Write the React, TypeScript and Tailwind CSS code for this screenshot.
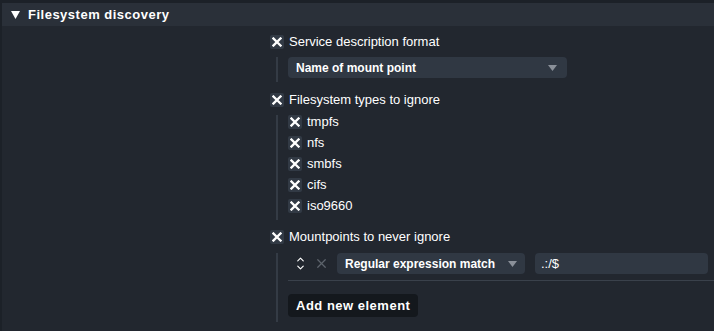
import { ChevronUp, ChevronDown, X } from 'lucide-react';

const font = { fontFamily: '"Liberation Sans", Arial, sans-serif' };

function Check() {
  return (
    <span className="flex items-center justify-center w-[14px] h-[14px] rounded-[2px] bg-[#323a45] shrink-0">
      <svg width="10" height="10" viewBox="0 0 10 10">
        <path d="M1.5 1.5 L8.5 8.5 M8.5 1.5 L1.5 8.5" stroke="#ffffff" strokeWidth="2.3" strokeLinecap="square" />
      </svg>
    </span>
  );
}

function Caret() {
  return (
    <svg width="9" height="6" viewBox="0 0 9 6" className="shrink-0">
      <path d="M0 0 L9 0 L4.5 6 Z" fill="#8a9099" />
    </svg>
  );
}

const fsTypes = ['tmpfs', 'nfs', 'smbfs', 'cifs', 'iso9660'];

export default function App() {
  return (
    <div className="w-[714px] h-[331px] bg-[#1c2128] pt-[3px] pl-[2px] text-white" style={font}>
      <div className="h-full bg-[#22272f]">
        {/* Header */}
        <div className="h-[23px] bg-[#2a3039] flex items-center pl-[9px] gap-[8px]">
          <svg width="9" height="8" viewBox="0 0 9 8">
            <path d="M0 0 L9 0 L4.5 8 Z" fill="#ffffff" />
          </svg>
          <span className="text-[13px] font-bold tracking-[0.5px]">Filesystem discovery</span>
        </div>

        {/* Content */}
        <div className="pl-[268px] pt-[8px] text-[13px]">
          {/* Service description format */}
          <div className="flex items-center gap-[5px] h-[16px]">
            <Check />
            <span>Service description format</span>
          </div>
          <div className="flex mt-[7px] ml-[6px]">
            <div className="w-[2px] bg-[#343b45] mr-[10px]" />
            <div className="w-[279px] h-[21px] rounded-[4px] bg-[#303843] flex items-center justify-between pl-[8px] pr-[10px] mb-[4px]">
              <span className="font-bold text-[12px]">Name of mount point</span>
              <Caret />
            </div>
          </div>

          {/* Filesystem types to ignore */}
          <div className="flex items-center gap-[5px] h-[16px] mt-[10px]">
            <Check />
            <span>Filesystem types to ignore</span>
          </div>
          <div className="flex mt-[7px] ml-[6px]">
            <div className="w-[2px] bg-[#343b45] mr-[10px]" />
            <div className="flex flex-col gap-[7px] pb-[7px]">
              {fsTypes.map((t) => (
                <div key={t} className="flex items-center gap-[5px] h-[14px]">
                  <Check />
                  <span>{t}</span>
                </div>
              ))}
            </div>
          </div>

          {/* Mountpoints to never ignore */}
          <div className="flex items-center gap-[5px] h-[16px] mt-[9px]">
            <Check />
            <span>Mountpoints to never ignore</span>
          </div>
          <div className="flex mt-[8px] ml-[6px]">
            <div className="w-[2px] bg-[#343b45] mr-[10px]" />
            <div className="flex-1">
              <div className="flex items-center h-[21px]">
                <div className="flex flex-col items-center w-[12px] ml-[6px] -space-y-[3px]">
                  <ChevronUp size={11} strokeWidth={2.5} color="#ffffff" />
                  <ChevronDown size={11} strokeWidth={2.5} color="#ffffff" />
                </div>
                <X size={15} strokeWidth={2} color="#5d636c" className="ml-[8px]" />
                <div className="ml-[8px] w-[188px] h-[21px] rounded-[4px] bg-[#303843] flex items-center justify-between pl-[8px] pr-[8px]">
                  <span className="font-bold text-[12px]">Regular expression match</span>
                  <Caret />
                </div>
                <div className="ml-[10px] w-[173px] h-[21px] rounded-[4px] bg-[#303843] flex items-center pl-[6px]">
                  <span>.:/$</span>
                </div>
              </div>
              <div className="h-[1px] bg-[#3a414b] mt-[6px]" />
              <div className="mt-[13px] pb-[5px]">
                <span className="inline-flex items-center h-[23px] px-[8px] rounded-[4px] bg-[#14181d] font-bold tracking-[0.5px]">
                  Add new element
                </span>
              </div>
            </div>
          </div>
        </div>
      </div>
    </div>
  );
}
